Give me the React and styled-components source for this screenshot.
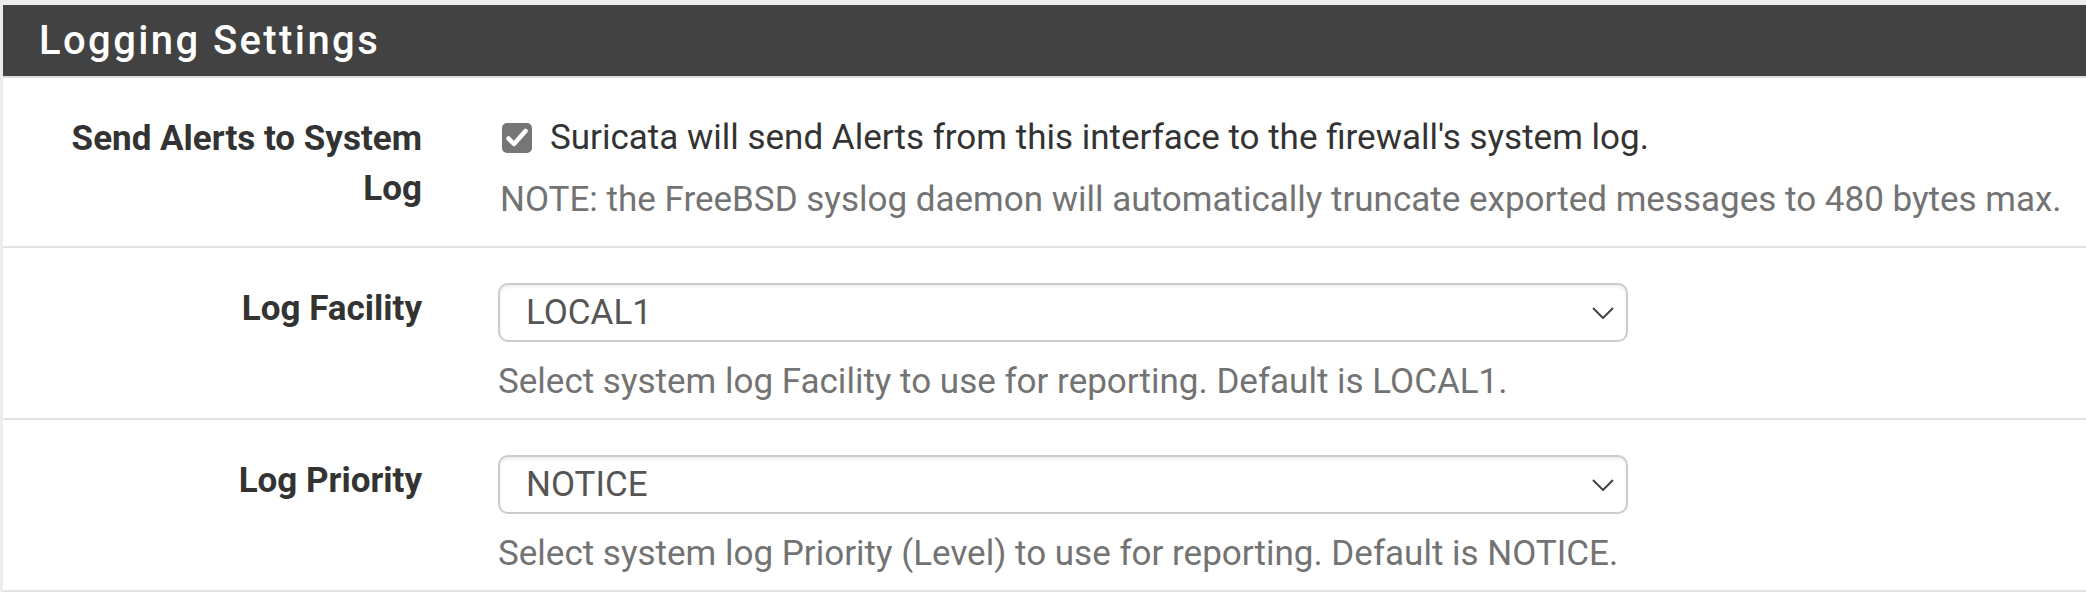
import React from "react";
import styled, { createGlobalStyle } from "styled-components";

const GlobalStyle = createGlobalStyle`
  html, body {
    margin: 0;
    padding: 0;
    background: #ececec;
  }
  body {
    font-family: Roboto, "Liberation Sans", Arial, sans-serif;
    overflow: hidden;
  }
`;

const Page = styled.div`
  width: 2086px;
  height: 592px;
  padding: 5px 0 0 3px;
  box-sizing: border-box;
  background: #ececec;
`;

const Panel = styled.section`
  background: #ffffff;
  height: 100%;
`;

const PanelHeading = styled.div`
  height: 71px;
  background: #424242;
  border-bottom: 2px solid #dcdcdc;
  display: flex;
  align-items: center;
  padding-left: 36px;
`;

const PanelTitle = styled.h2`
  margin: 0;
  font-family: Roboto, "Liberation Sans", Arial, sans-serif;
  font-weight: 500;
  font-size: 40px;
  line-height: 50px;
  letter-spacing: 2.4px;
  color: #ffffff;
`;

const Row = styled.div`
  display: grid;
  grid-template-columns: 419px 1fr;
  column-gap: 76px;
  padding: 35px 0 11px;
  min-height: 170px;
  box-sizing: border-box;
  border-bottom: 2px solid #e2e2e2;
`;

const Label = styled.div`
  padding-left: 40px;
  padding-top: 1px;
  text-align: right;
  font-weight: 700;
  font-size: 35px;
  line-height: 50px;
  color: #333333;
`;

const Content = styled.div`
  display: flex;
  flex-direction: column;
  align-items: flex-start;
`;

const CheckLine = styled.label`
  display: flex;
  align-items: center;
  gap: 18px;
  margin-left: 4px;
  font-size: 35px;
  line-height: 50px;
  color: #333333;
`;

const CheckBox = styled.span`
  width: 30px;
  height: 30px;
  border-radius: 5px;
  background: #767676;
  display: inline-flex;
  align-items: center;
  justify-content: center;
  flex: none;
`;

const HelpText = styled.div`
  margin-top: ${(p) => (p.$afterText ? "12px" : "15px")};
  margin-left: ${(p) => (p.$afterText ? "2px" : "0")};
  font-size: 35px;
  line-height: 50px;
  color: #737373;
`;

const SelectBox = styled.div`
  width: 1130px;
  height: 59px;
  box-sizing: border-box;
  border: 2px solid #cccccc;
  border-radius: 10px;
  box-shadow: inset 0 2px 3px rgba(0, 0, 0, 0.075);
  display: flex;
  align-items: center;
  justify-content: space-between;
  padding: 0 12px 0 26px;
  font-size: 35px;
  color: #555555;
  background: #ffffff;
`;

const Chevron = () => (
  <svg width="22" height="12" viewBox="0 0 22 12" fill="none">
    <polyline
      points="1,1 11,11 21,1"
      stroke="#444444"
      strokeWidth="2"
      strokeLinejoin="miter"
    />
  </svg>
);

const Check = () => (
  <svg width="30" height="30" viewBox="0 0 30 30" fill="none">
    <path
      d="M6.5 15.5 L12 21 L23.5 8"
      stroke="#ffffff"
      strokeWidth="4.5"
      strokeLinecap="round"
      strokeLinejoin="round"
    />
  </svg>
);

const Select = ({ value }) => (
  <SelectBox>
    <span>{value}</span>
    <Chevron />
  </SelectBox>
);

export default function App() {
  return (
    <>
      <GlobalStyle />
      <Page>
        <Panel>
          <PanelHeading>
            <PanelTitle>Logging Settings</PanelTitle>
          </PanelHeading>

          <Row>
            <Label>Send Alerts to System Log</Label>
            <Content>
              <CheckLine>
                <CheckBox>
                  <Check />
                </CheckBox>
                Suricata will send Alerts from this interface to the firewall's system log.
              </CheckLine>
              <HelpText $afterText>
                NOTE: the FreeBSD syslog daemon will automatically truncate exported messages to 480 bytes max.
              </HelpText>
            </Content>
          </Row>

          <Row>
            <Label>Log Facility</Label>
            <Content>
              <Select value="LOCAL1" />
              <HelpText>
                Select system log Facility to use for reporting. Default is LOCAL1.
              </HelpText>
            </Content>
          </Row>

          <Row>
            <Label>Log Priority</Label>
            <Content>
              <Select value="NOTICE" />
              <HelpText>
                Select system log Priority (Level) to use for reporting. Default is NOTICE.
              </HelpText>
            </Content>
          </Row>
        </Panel>
      </Page>
    </>
  );
}
